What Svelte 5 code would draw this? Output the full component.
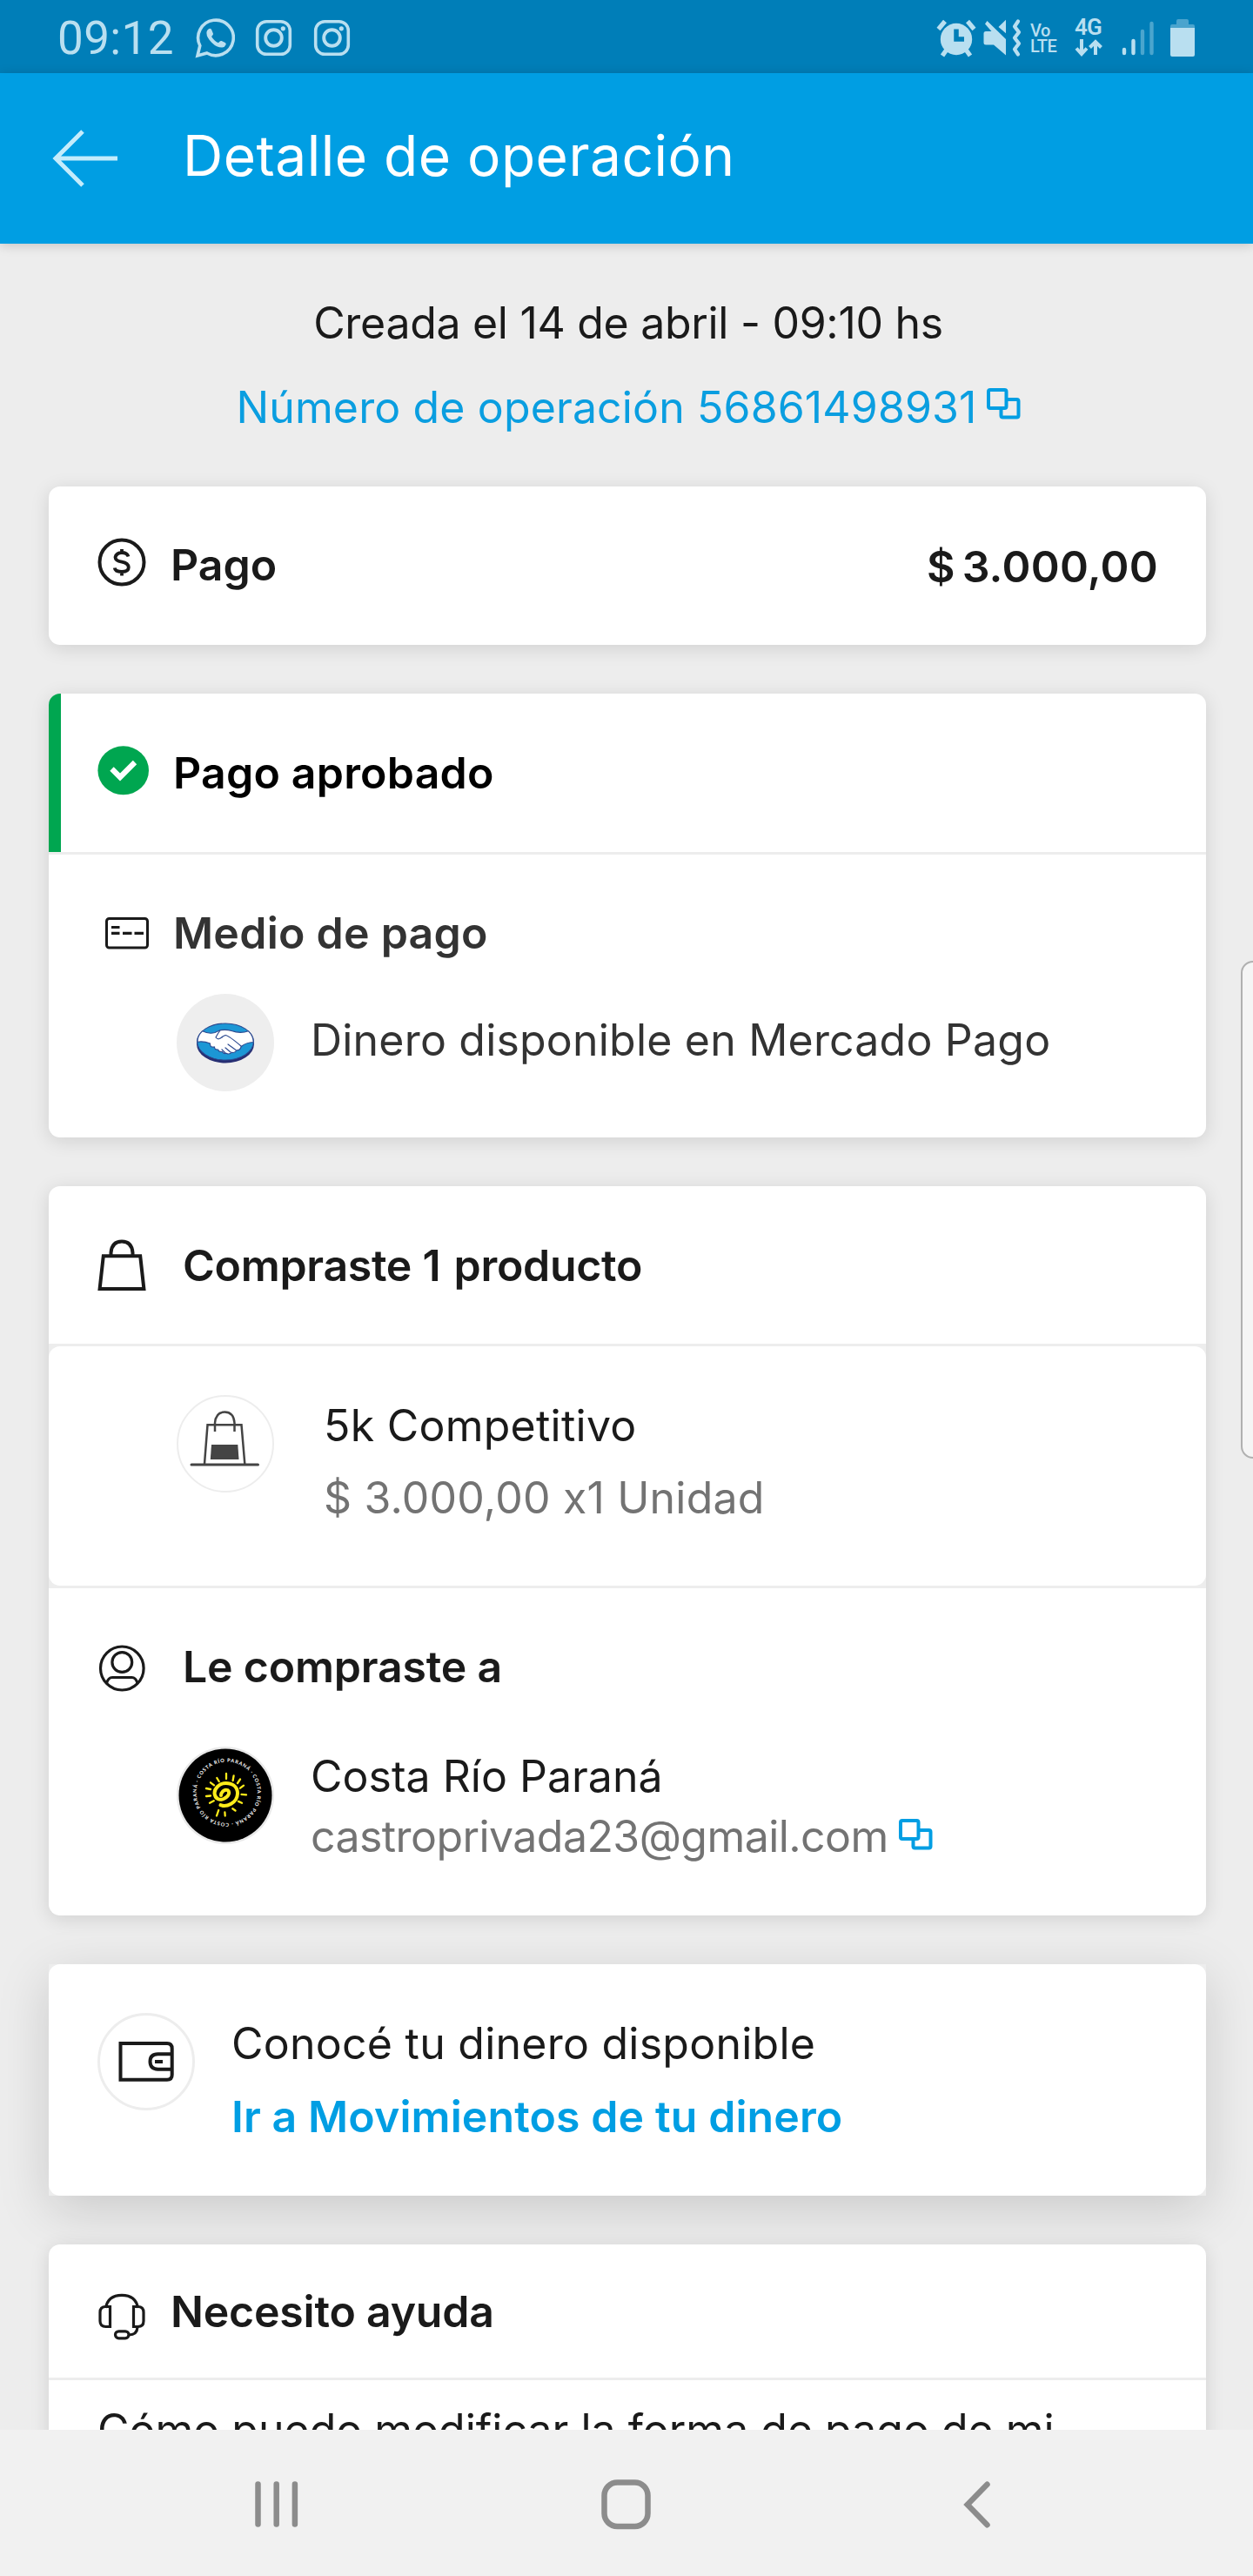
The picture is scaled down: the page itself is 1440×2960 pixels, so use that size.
<script>
  const rays = [
    'M57 31v6', 'M65.6 33.5l-1 5.5', 'M73 37.5l-3 4.5', 'M77 44.7l-4 3', 'M80 55.3l-5.5-.5',
    'M75 64.7l-4-1.8', 'M67.5 73.5l-3.2-2.2', 'M55.7 79.5l-.3-4', 'M46 79.5l2.2-6.5', 'M38 64.7l4.7-2.4',
    'M34 57l5-.5', 'M34 48l5 1', 'M39 41.3l4 3', 'M46.3 36l2.4 4'
  ];
  const ring = 'COSTA RÍO PARANÁ · COSTA RÍO PARANÁ · COSTA RÍO PARANÁ ·';
</script>

{#snippet instagram()}
  <svg class="insta" width="43" height="43" viewBox="0 0 43 43" fill="none" stroke="currentColor">
    <rect x="2.7" y="2.7" width="37.6" height="37.6" rx="10.5" stroke-width="3.6" />
    <circle cx="21.5" cy="21.5" r="9.3" stroke-width="3.9" />
    <circle cx="32.3" cy="10.8" r="2.6" fill="currentColor" stroke="none" />
  </svg>
{/snippet}

{#snippet copy()}
  <svg class="copy" width="39" height="36" viewBox="0 0 39 36" fill="none" stroke="#009ee3" stroke-width="4">
    <rect x="2" y="2" width="20.5" height="21" rx="2" />
    <path d="M22.5 13h12q2 0 2 2v16.5q0 2-2 2h-16q-2 0-2-2v-8.5" />
  </svg>
{/snippet}

<div class="screen">
  <div class="status">
    <span class="time">09:12</span>
    <svg width="46" height="48" viewBox="0 0 46 48" fill="none" stroke="currentColor">
      <path d="M3 44l2.8-11.5A20.3 20.3 0 1 1 13.8 41z" stroke-width="3.6" />
      <path d="M16.5 13q2-.6 2.8 1.4l1.6 4q.4 1.2-.6 2.2l-1.2 1.4q2.8 5 7.8 7.2l1.8-1.8q.9-.8 2-.3l4 2q1.4.8.9 2.2q-1.2 3-4.2 3.3q-6 .3-12-5.7q-6-6-6-11q0-3.4 3.1-4.9z" fill="currentColor" stroke="none" />
    </svg>
    {@render instagram()}
    {@render instagram()}
    <div class="tray">
      <svg width="46" height="46" viewBox="0 0 46 46">
        <path d="M2.5 12.5l7.5-9M43.5 12.5l-7.5-9M7 43l5-7M39 43l-5-7" stroke="currentColor" stroke-width="5.2" />
        <circle cx="23" cy="24" r="18.2" fill="currentColor" />
        <path d="M23 12.5v11.5h9" fill="none" stroke="#007eb8" stroke-width="5.5" />
      </svg>
      <svg class="mute" width="44" height="46" viewBox="0 0 44 46">
        <path d="M4.5 3L26 24v18.5L12 30.5H3Q.5 30.5 .5 28V17.5Q.5 15 3 15H9.5L2 6.5zM17.5 10L26 1.7v15.5z" fill="currentColor" />
        <path d="M40 3.5l-4 6 5 6.5-5 6.5 5 6.5-5 6.5 4 6" fill="none" stroke="currentColor" stroke-width="4.2" stroke-linecap="round" stroke-linejoin="round" />
      </svg>
      <span class="volte"><span>Vo</span><span>LTE</span></span>
      <span class="net">
        <b>4G</b>
        <svg width="32" height="21" viewBox="0 0 32 21" fill="none" stroke="currentColor" stroke-width="4">
          <path d="M8 0v16M2 10.5l6 6.5L14 10.5M24 18V3M17.5 9.5L24 3l6.5 6.5" />
        </svg>
      </span>
      <svg class="signal" width="38" height="42" viewBox="0 0 38 42" stroke="currentColor" stroke-width="4.4" stroke-linecap="round">
        <path d="M3 34v4M13.5 24v14" />
        <path d="M24 13v25M34.5 4v34" opacity=".4" />
      </svg>
      <svg width="28" height="44" viewBox="0 0 28 44" fill="currentColor">
        <path d="M0 10V8q0-2 2-2h5V2q0-2 2-2h10q2 0 2 2v4h5q2 0 2 2v2z" opacity=".4" />
        <path d="M0 10h28v31q0 2-2 2H2q-2 0-2-2z" />
      </svg>
    </div>
  </div>

  <header>
    <svg width="76" height="66" viewBox="0 0 76 66" fill="none" stroke="#c4ecfc" stroke-width="5">
      <path d="M75 33H4M35 2L4 33l31 31" />
    </svg>
    <h1>Detalle de operación</h1>
  </header>

  <main>
    <div class="intro">
      <p class="created">Creada el 14 de abril - 09:10 hs</p>
      <p class="number">Número de operación 56861498931{@render copy()}</p>
    </div>

    <section class="card amount">
      <svg class="coin" width="56" height="56" viewBox="0 0 56 56" fill="none" stroke="#1a1a1a">
        <circle cx="28" cy="28" r="25.5" stroke-width="4" />
        <path d="M35.5 21.5Q34 17 28 17T20.5 22.2Q20.5 26.3 28 27.6T35.8 33.8Q35.8 39 28 39T19.8 34.5M28 13v5M28 38v5.5" stroke-width="3.8" />
      </svg>
      <h2>Pago</h2>
      <strong>$ 3.000,00</strong>
    </section>

    <section class="card status-card">
      <div class="approved">
        <svg width="60" height="57" viewBox="0 0 60 57">
          <ellipse cx="29.7" cy="28.3" rx="29.3" ry="28" fill="#00a650" />
          <path d="M16.5 26.5l9.5 9.5 17-17" fill="none" stroke="#fff" stroke-width="6.2" />
        </svg>
        <h2>Pago aprobado</h2>
      </div>
      <div class="method">
        <div class="head">
          <svg width="50" height="37" viewBox="0 0 50 37" fill="none" stroke="#1a1a1a">
            <rect x="1.5" y="1.5" width="47" height="33.5" rx="3" stroke-width="3" />
            <path d="M7 11.5h9.5M7 18.3h9.5M20 18.3h10.5M33.5 18.3H44" stroke-width="3.2" />
          </svg>
          <h2>Medio de pago</h2>
        </div>
        <div class="item">
          <svg width="112" height="112" viewBox="0 0 112 112">
            <circle cx="56" cy="56" r="56" fill="#eee" />
            <ellipse cx="56" cy="57.5" rx="33" ry="22" fill="#272f73" />
            <ellipse cx="56" cy="55" rx="32.4" ry="21" fill="#1c97d5" stroke="#2d4a90" stroke-width="1.1" />
            <path d="M29.5 42.8Q37 46.5 44 44.5L50 41.8Q57 40.6 63 42.5Q73 46 82.5 42.8Q88 48 88.2 55.5Q80 55.8 74.2 60.5Q73 65 69 64.8Q67 68.5 63.5 67.2Q60.5 70.3 57 68.2Q54 69.5 52.5 66.5Q48.5 67 47.5 64Q43.5 64.5 43.5 61Q38 62 38.5 57Q31 54 23.9 55.2Q24 48 29.5 42.8z" fill="#fff" stroke="#2d4a90" stroke-width="1.1" />
            <path d="M50 42Q47 46 45 50Q48 54 53 49L56 47.5Q60 48 74 60M59 58l9 6.5M56 62l6 5M52 64l4 4" fill="none" stroke="#2d4a90" stroke-width="1.2" stroke-linecap="round" />
          </svg>
          <p>Dinero disponible en Mercado Pago</p>
        </div>
      </div>
    </section>

    <section class="card">
      <div class="row bought">
        <svg width="56" height="60" viewBox="0 0 56 60" fill="none" stroke="#1a1a1a" stroke-width="4">
          <path d="M6.8 19.3h42.4L53.4 57H2.6zM15.5 19V15.5Q16.5 2.5 28 2.5T40.5 15.5V19" />
        </svg>
        <h2>Compraste <span class="count">1</span> producto</h2>
      </div>
      <div class="shell">
        <div class="product">
          <svg width="112" height="112" viewBox="0 0 112 112" fill="none" stroke="#444">
            <circle cx="56" cy="56" r="55" stroke="#ededed" stroke-width="2" />
            <path d="M32 79L35.5 34.3H74.5L78.3 79" stroke-width="2.5" />
            <path d="M17 80H93.5" stroke-width="3" stroke-linecap="round" />
            <path d="M44 42V32Q45 19.5 55.2 19.5T66.5 32V42" stroke-width="2.5" />
            <path d="M40 57H70.3L71.5 74H38.8z" fill="#444" stroke="none" />
          </svg>
          <div>
            <p class="name">5k Competitivo</p>
            <p class="price">$ 3.000,00 x1 Unidad</p>
          </div>
        </div>
      </div>
      <div class="seller">
        <div class="head">
          <svg width="56" height="54" viewBox="0 0 56 54" fill="none" stroke="#1a1a1a" stroke-width="3.2">
            <ellipse cx="28.3" cy="27" rx="24.8" ry="25" />
            <circle cx="28.3" cy="20" r="11.4" />
            <path d="M10.5 44Q12.5 37.5 17 37.5H39.5Q44 37.5 46 44" />
          </svg>
          <h2>Le compraste a</h2>
        </div>
        <div class="item">
          <svg width="112" height="112" viewBox="0 0 112 112">
            <circle cx="56" cy="56" r="56" fill="#e9e9e9" />
            <circle cx="56" cy="56" r="53.5" fill="#000" />
            <path id="ring" d="M26.6 36.9A35 35 0 1 1 26.5 37.1" fill="none" />
            <text class="ring" textLength="216"><textPath href="#ring">{ring}</textPath></text>
            <g fill="none" stroke="#ffec1a" stroke-linecap="round">
              <path d="M50.5 67.2C57 70 69.5 65 70 54C70 45 63 42 56.5 42C49 42 43.5 48 43.5 53.5C44 60 49.5 62 54 60C60.5 57 61.5 52 58.5 50C54.5 48.5 51 53 51 56" stroke-width="4" />
              <path d={rays.join('')} stroke-width="2.3" />
            </g>
          </svg>
          <div>
            <p>Costa Río Paraná</p>
            <p class="mail">castroprivada23@gmail.com{@render copy()}</p>
          </div>
        </div>
      </div>
    </section>

    <div class="lifted">
      <section class="card money">
        <svg width="112" height="112" viewBox="0 0 112 112" fill="none" stroke="#1a1a1a">
          <circle cx="56" cy="56" r="54.5" stroke="#ededed" stroke-width="3" />
          <path d="M26.5 35H80Q85.7 35 85.7 41V71Q85.7 76.8 80 76.8H26.5z" stroke-width="4" />
          <path d="M85 47.3H69.5Q60.5 47.3 60.5 55.8T69.5 64.8H85" stroke-width="4" />
          <path d="M66 56h9" stroke-width="4" />
        </svg>
        <div>
          <p class="know">Conocé tu dinero disponible</p>
          <a class="go" href="#movimientos">Ir a Movimientos de tu dinero</a>
        </div>
      </section>
    </div>

    <section class="card help">
      <div class="row support">
        <svg width="56" height="54" viewBox="0 0 56 54" fill="none" stroke="#1a1a1a" stroke-width="3.2">
          <path d="M9.5 17Q12 2.3 28 2.3T46.5 17" />
          <path d="M14.5 15.5v23H9.5Q3 38.5 3 32V22Q3 15.5 9.5 15.5zM41.5 15.5v23H46.5Q53 38.5 53 32V22Q53 15.5 46.5 15.5z" />
          <path d="M46 39Q45.5 48 36 48" />
          <rect x="20.5" y="43.8" width="15.5" height="8" rx="4" />
        </svg>
        <h2>Necesito ayuda</h2>
      </div>
      <p class="question">Cómo puedo modificar la forma de pago de mi</p>
    </section>
  </main>

  <nav>
    <svg width="50" height="53" viewBox="0 0 50 53" stroke="#8c8c8c" stroke-width="6.5" stroke-linecap="round">
      <path d="M3.5 3.5v46M24.7 3.5v46M45.9 3.5v46" />
    </svg>
    <svg width="57" height="58" viewBox="0 0 57 58" fill="none" stroke="#8c8c8c" stroke-width="6.5">
      <rect x="3.5" y="3.5" width="50" height="50.5" rx="15" />
    </svg>
    <svg class="prev" width="32" height="54" viewBox="0 0 32 54" fill="none" stroke="#8c8c8c" stroke-width="6.5" stroke-linecap="round">
      <path d="M27.5 3.8L4.8 27l22.7 23.2" />
    </svg>
  </nav>

  <div class="edge"></div>
</div>

<style>
  :global(body) { margin: 0; }
  .screen {
    position: relative;
    width: 1440px;
    height: 2960px;
    overflow: hidden;
    display: flex;
    flex-direction: column;
    background: #ededed;
    color: #1a1a1a;
    font: 400 50px/64px Inter, Roboto, sans-serif;
    white-space: nowrap;
  }
  svg { display: block; flex: none; }
  p, h1, h2 { margin: 0; }
  h2, strong { font-size: 50px; font-weight: 600; line-height: 64px; }

  .status {
    height: 84px;
    flex: none;
    box-sizing: border-box;
    display: flex;
    align-items: center;
    padding: 3px 67px 0 66px;
    background: #007eb8;
    color: #b9dff0;
    font-family: Roboto, sans-serif;
  }
  .time { width: 158px; font-size: 53px; letter-spacing: 0.4px; }
  .insta { margin-left: 23px; }
  .insta + .insta { margin-left: 24px; }
  .tray { display: flex; align-items: center; margin-left: auto; }
  .mute { margin-left: 8px; }
  .volte {
    display: grid;
    width: 36px;
    margin-left: 10px;
    font-size: 20px;
    line-height: 18px;
    font-weight: 500;
    letter-spacing: -0.5px;
  }
  .net { display: grid; gap: 4px; width: 34px; margin-left: 15px; }
  .net b { font-size: 26px; line-height: 20px; font-weight: 600; letter-spacing: -0.8px; }
  .signal { margin: 0 18px 0 20px; }

  header {
    position: relative;
    z-index: 1;
    height: 196px;
    flex: none;
    display: flex;
    align-items: center;
    gap: 74px;
    padding-left: 60px;
    background: #009ee3;
    color: #fff;
    box-shadow: 0 2px 12px rgba(0, 0, 0, 0.18);
  }
  h1 { padding-bottom: 6px; font-size: 64px; line-height: 80px; font-weight: 400; letter-spacing: 0.5px; }

  main {
    flex: none;
    height: 2512px;
    overflow: hidden;
    box-sizing: border-box;
    display: flex;
    flex-direction: column;
    gap: 56px;
    padding: 59px 54px 0 56px;
  }
  .intro { flex: none; display: grid; gap: 33px; height: 164px; align-content: start; justify-items: center; }
  .created { padding-left: 2px; letter-spacing: -0.3px; }
  .number { display: flex; gap: 11px; padding-left: 2px; color: #0a9ee0; letter-spacing: 0.13px; }
  .number :global(.copy) { margin-top: 10px; }

  .card {
    flex: none;
    border-radius: 13px;
    background: #fff;
    box-shadow: 0 4px 22px rgba(0, 0, 0, 0.12);
  }
  .row { display: flex; align-items: center; border-bottom: 3px solid #ededed; }
  .head, .item { display: flex; }
  .head { align-items: center; height: 64px; }

  .amount {
    display: flex;
    align-items: center;
    height: 182px;
    box-sizing: border-box;
    padding: 0 55px 3px 56px;
  }
  .coin { margin: -5px 28px 0 0; }
  .amount strong { margin-left: auto; padding-top: 5px; letter-spacing: 0.25px; word-spacing: -5px; }

  .status-card { overflow: hidden; }
  .approved {
    display: flex;
    align-items: center;
    height: 182px;
    padding-left: 42px;
    border-left: 14px solid #00a650;
    color: #000;
  }
  .approved svg { margin-bottom: 5px; }
  .approved h2 { margin-left: 27px; letter-spacing: 0.2px; }
  .method {
    height: 328px;
    box-sizing: border-box;
    padding: 58px 0 0 65px;
    border-top: 3px solid #ededed;
    color: #333;
  }
  .method h2 { margin-left: 28px; letter-spacing: 0.25px; }
  .method .item { margin: 38px 0 0 82px; }
  .method .item p { padding-top: 21px; margin-left: 42px; letter-spacing: 0.2px; }

  .bought { height: 181px; padding-left: 56px; }
  .bought h2 { margin-left: 42px; letter-spacing: -0.3px; }
  .count { margin-right: 3px; }
  .shell { border-bottom: 3px solid #ededed; background: #ededed; }
  .product {
    display: flex;
    height: 275px;
    box-sizing: border-box;
    padding: 56px 0 0 147px;
    border-radius: 13px;
    background: #fff;
  }
  .name { margin: 3px 0 19px 57px; letter-spacing: 0.25px; }
  .price { margin-left: 57px; color: #737373; letter-spacing: 0.2px; }
  .seller { height: 376px; box-sizing: border-box; padding: 58px 0 0 56px; }
  .seller .head svg { margin-top: 4px; }
  .seller h2 { margin-left: 42px; letter-spacing: -0.2px; }
  .seller .item { margin: 60px 0 0 91px; }
  .seller p { margin-left: 42px; line-height: 69px; }
  .mail { display: flex; gap: 12px; color: #737373; letter-spacing: -0.57px; }
  .mail :global(.copy) { margin-top: 14px; }
  .ring { font: 700 5.6px Lato, sans-serif; fill: #fff; }

  .lifted { flex: none; background: #ededed; box-shadow: 0 16px 56px rgba(0, 0, 0, 0.15); }
  .money {
    display: flex;
    height: 266px;
    box-sizing: border-box;
    padding: 56px 0 0 56px;
    box-shadow: none;
  }
  .money div { display: grid; margin: -7px 0 0 42px; align-content: start; }
  .know { line-height: 84px; letter-spacing: 0.25px; }
  .go { color: #009ee3; font-weight: 600; line-height: 84px; letter-spacing: 0.1px; text-decoration: none; }

  .help { height: 400px; }
  .support { height: 153px; padding-left: 56px; }
  .support svg { margin: 13px 28px 0 0; }
  .support h2 { letter-spacing: -0.22px; }
  .question { padding: 25px 0 0 56px; }

  nav {
    position: relative;
    z-index: 1;
    height: 168px;
    flex: none;
    display: flex;
    align-items: center;
    gap: 348px;
    box-sizing: border-box;
    padding: 3px 0 0 293px;
    background: #f1f1f1;
  }
  .prev { margin-left: 11px; }

  .edge {
    position: absolute;
    left: 1426px;
    top: 1104px;
    width: 24px;
    height: 568px;
    border: 2px solid #b0b0b0;
    border-radius: 16px;
    background: #f5f5f5;
  }
</style>
